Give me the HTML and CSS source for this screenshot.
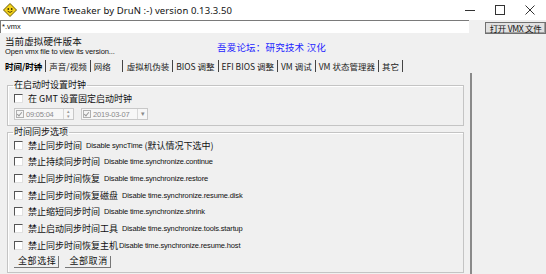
FILE: index.html
```html
<!DOCTYPE html>
<html lang="zh-CN">
<head>
    <meta charset="UTF-8">
    <title>VMWare Tweaker by DruN :-) version 0.13.3.50</title>
    <link rel="stylesheet" href="styles.css">
</head>
<body>
    <div class="window">
        <div class="titlebar">
            <svg class="app-icon" width="14" height="14" viewBox="0 0 14 14">
                <polygon points="7,0.5 13.5,7 7,13.5 0.5,7" fill="#f4d21a" stroke="#6b5a00" stroke-width="1"/>
                <circle cx="5.3" cy="6" r="0.9" fill="#3b2f00"/>
                <circle cx="8.7" cy="6" r="0.9" fill="#3b2f00"/>
                <path d="M4.6 8.2 Q7 10.6 9.4 8.2" fill="none" stroke="#3b2f00" stroke-width="0.9"/>
            </svg>
            <span class="title">VMWare Tweaker by DruN :-) version 0.13.3.50</span>
            <div class="win-controls">
                <svg width="10" height="10" viewBox="0 0 10 10"><line x1="0" y1="5.5" x2="10" y2="5.5" stroke="#333" stroke-width="1"/></svg>
                <svg width="10" height="10" viewBox="0 0 10 10"><rect x="0.5" y="0.5" width="9" height="9" fill="none" stroke="#333" stroke-width="1"/></svg>
                <svg width="10" height="10" viewBox="0 0 10 10"><path d="M0.5 0.5 L9.5 9.5 M9.5 0.5 L0.5 9.5" stroke="#333" stroke-width="1"/></svg>
            </div>
        </div>

        <div class="toolbar">
            <div class="path-input">*.vmx</div>
            <button class="btn open-btn">打开 VMX 文件</button>
        </div>

        <div class="info">
            <div class="version">
                <div class="version-title">当前虚拟硬件版本</div>
                <div class="version-sub">Open vmx file to view its version...</div>
            </div>
            <div class="credit">吾爱论坛：研究技术 汉化</div>
        </div>

        <div class="tabs">
            <span class="tab active">时间/时钟</span>
            <span class="tab">声音/视频</span>
            <span class="tab tab-wide">网络</span>
            <span class="tab">虚拟机伪装</span>
            <span class="tab">BIOS 调整</span>
            <span class="tab">EFI BIOS 调整</span>
            <span class="tab">VM 调试</span>
            <span class="tab">VM 状态管理器</span>
            <span class="tab">其它</span>
        </div>

        <div class="main">
            <div class="panel">
                <fieldset class="group group-boot">
                    <legend>在启动时设置时钟</legend>
                    <label class="check"><span class="box"></span><span class="cn">在 GMT 设置固定启动时钟</span></label>
                    <div class="pickers">
                        <div class="picker time-picker">
                            <span class="box box-small checked"></span>
                            <span class="picker-text">09:05:04</span>
                            <span class="spin"><span>▴</span><span>▾</span></span>
                        </div>
                        <div class="picker date-picker">
                            <span class="box box-small checked"></span>
                            <span class="picker-text">2019-03-07</span>
                            <span class="drop">▾</span>
                        </div>
                    </div>
                </fieldset>

                <fieldset class="group group-sync">
                    <legend>时间同步选项</legend>
                    <label class="check"><span class="box"></span><span class="cn">禁止同步时间</span><span class="en">Disable syncTime</span><span class="cn note">(默认情况下选中)</span></label>
                    <label class="check"><span class="box"></span><span class="cn">禁止持续同步时间</span><span class="en">Disable time.synchronize.continue</span></label>
                    <label class="check"><span class="box"></span><span class="cn">禁止同步时间恢复</span><span class="en">Disable time.synchronize.restore</span></label>
                    <label class="check"><span class="box"></span><span class="cn">禁止同步时间恢复磁盘</span><span class="en">Disable time.synchronize.resume.disk</span></label>
                    <label class="check"><span class="box"></span><span class="cn">禁止缩短同步时间</span><span class="en">Disable time.synchronize.shrink</span></label>
                    <label class="check"><span class="box"></span><span class="cn">禁止启动同步时间工具</span><span class="en">Disable time.synchronize.tools.startup</span></label>
                    <label class="check"><span class="box"></span><span class="cn">禁止同步时间恢复主机</span><span class="en tight">Disable time.synchronize.resume.host</span></label>
                    <div class="actions">
                        <button class="btn flat-btn">全部选择</button>
                        <button class="btn flat-btn">全部取消</button>
                    </div>
                </fieldset>
            </div>
            <div class="side"></div>
        </div>
    </div>
</body>
</html>
```

FILE: styles.css
```css
body {
    margin: 0;
    background: #f0f0f0;
    font-family: "Liberation Sans", "Noto Sans CJK SC", sans-serif;
    color: #111;
    overflow: hidden;
}

.window {
    width: 546px;
    height: 274px;
    overflow: hidden;
}

/* title bar */
.titlebar {
    height: 20px;
    background: #fff;
    display: flex;
    align-items: center;
}

.app-icon {
    margin: 0 5px 0 3px;
}

.title {
    font-family: "Noto Sans", sans-serif;
    font-size: 9.5px;
    color: #111;
    letter-spacing: 0.1px;
}

.win-controls {
    margin-left: auto;
    display: flex;
    gap: 20px;
    padding-right: 11px;
}

/* toolbar */
.toolbar {
    display: flex;
    align-items: flex-start;
    height: 14px;
}

.path-input {
    width: 468px;
    height: 12px;
    background: #fff;
    border-top: 1px solid #7a7a7a;
    border-left: 1px solid #7a7a7a;
    font-size: 7.5px;
    line-height: 12px;
    padding-left: 1px;
}

.btn {
    font-family: "Noto Sans CJK SC", sans-serif;
    font-size: 8.5px;
    color: #111;
    background: #e1e1e1;
    border: 1px solid #707070;
    padding: 0;
    cursor: pointer;
}

.open-btn {
    margin: 2px 0 0 16px;
    height: 12px;
    width: 61px;
    line-height: 10px;
    letter-spacing: -0.3px;
    box-shadow: inset -1px -1px 0 #a0a0a0;
}

/* version + credit */
.info {
    display: flex;
    height: 26px;
    padding-left: 5px;
}

.version {
    width: 112px;
}

.version-title {
    font-family: "Noto Sans CJK SC", sans-serif;
    font-size: 9.5px;
    line-height: 11px;
    margin-top: 2px;
    letter-spacing: 0.1px;
}

.version-sub {
    font-size: 7.5px;
    line-height: 10px;
    letter-spacing: -0.1px;
    white-space: nowrap;
}

.credit {
    font-family: "Noto Sans CJK SC", sans-serif;
    font-size: 9.5px;
    color: #2323ff;
    margin: 6px 0 0 100px;
    letter-spacing: 0.2px;
}

/* tabs */
.tabs {
    display: flex;
    height: 13px;
    padding-left: 5px;
}

.tab {
    font-family: "Noto Sans CJK SC", sans-serif;
    font-size: 8.5px;
    line-height: 12px;
    padding: 0 3px;
    border-right: 1px solid #444;
    height: 12px;
    color: #222;
}

.tab:first-child {
    padding-left: 0;
}

.tab.active {
    color: #000;
    font-weight: 700;
}

.tab-wide {
    padding-right: 11px;
}

.tab-wide + .tab {
    padding-left: 4px;
}

/* main area */
.main {
    display: flex;
    height: 201px;
}

.panel {
    width: 463px;
    padding: 6px 0 0 7px;
    border-right: 2px solid #8a8a8a;
}

.group {
    margin: 0;
    padding: 0 0 0 6px;
    border: 1px solid #c4c4c4;
    box-shadow: inset 1px 1px 0 #fff;
    width: 449px;
}

.group legend {
    font-family: "Noto Sans CJK SC", sans-serif;
    font-size: 9px;
    line-height: 12px;
    height: 12px;
    padding: 0 1px;
    margin-left: -1px;
}

.group-boot {
    padding-bottom: 5px;
}

.group-sync {
    margin-top: 0;
    padding-bottom: 4px;
}

.check {
    display: flex;
    align-items: center;
    height: 16.66px;
    white-space: nowrap;
}

.group-sync .check:first-of-type {
    margin-top: -1px;
}

.group-boot .check {
    height: 14px;
}

.box {
    width: 7px;
    height: 7px;
    background: #fff;
    border-top: 1px solid #555;
    border-left: 1px solid #555;
    border-right: 1px solid #e0e0e0;
    border-bottom: 1px solid #e0e0e0;
    margin-right: 5px;
    flex: none;
}

.cn {
    font-family: "Noto Sans CJK SC", sans-serif;
    font-size: 9px;
    letter-spacing: 0;
}

.cn.note {
    margin-left: 2px;
}

.en {
    font-size: 7.5px;
    letter-spacing: -0.15px;
    margin-left: 4px;
}

.en.tight {
    margin-left: 1px;
}

/* time / date pickers */
.pickers {
    display: flex;
    gap: 7px;
    margin-top: 3px;
}

.picker {
    display: flex;
    align-items: center;
    height: 10px;
    border: 1px solid #c8c8c8;
    background: #f7f7f7;
    color: #8a8a8a;
    font-size: 7.5px;
}

.time-picker {
    width: 58px;
}

.date-picker {
    width: 65px;
}

.box-small {
    width: 6px;
    height: 6px;
    margin: 0 2px 0 1px;
    background: #f4f4f4;
    border-color: #b0b0b0;
    position: relative;
}

.box-small.checked::after {
    content: "";
    position: absolute;
    left: 1px;
    top: 0;
    width: 2px;
    height: 4px;
    border-right: 1px solid #9a9a9a;
    border-bottom: 1px solid #9a9a9a;
    transform: rotate(40deg);
}

.picker-text {
    letter-spacing: -0.2px;
}

.spin {
    margin-left: auto;
    width: 9px;
    height: 10px;
    display: flex;
    flex-direction: column;
    font-size: 5px;
    line-height: 5px;
    text-align: center;
    border-left: 1px solid #d8d8d8;
    color: #9a9a9a;
}

.drop {
    margin-left: auto;
    width: 9px;
    height: 10px;
    font-size: 7px;
    line-height: 10px;
    text-align: center;
    border-left: 1px solid #d8d8d8;
    color: #8a8a8a;
}

/* bottom buttons */
.actions {
    display: flex;
    gap: 6px;
    margin-top: 2px;
}

.flat-btn {
    height: 12px;
    line-height: 10px;
    background: #f0f0f0;
    border: none;
    border-right: 1px solid #777;
    border-bottom: 1px solid #777;
    padding: 0 2px 0 4px;
    font-size: 9px;
    letter-spacing: 0.6px;
}

.side {
    flex: 1;
}
```
